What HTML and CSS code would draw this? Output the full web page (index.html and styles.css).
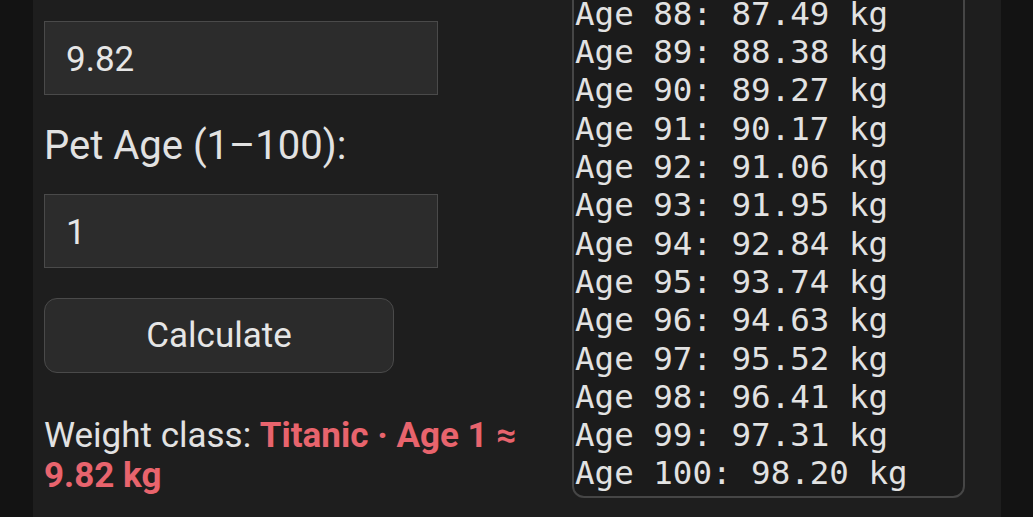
FILE: index.html
```html
<!DOCTYPE html>
<html lang="en">
<head>
<meta charset="utf-8">
<title>Pet Weight Calculator</title>
<link rel="stylesheet" href="styles.css">
</head>
<body>
<main class="panel">
  <section class="form-col">
    <input class="field" type="text" value="9.82">
    <label class="label">Pet Age (1–100):</label>
    <input class="field" type="text" value="1">
    <button class="btn" type="button">Calculate</button>
    <p class="result">Weight class: <strong class="hl">Titanic · Age 1 ≈ 9.82 kg</strong></p>
  </section>
  <section class="table-col">
<pre class="table">Age 85: 84.81 kg
Age 86: 85.70 kg
Age 87: 86.59 kg
Age 88: 87.49 kg
Age 89: 88.38 kg
Age 90: 89.27 kg
Age 91: 90.17 kg
Age 92: 91.06 kg
Age 93: 91.95 kg
Age 94: 92.84 kg
Age 95: 93.74 kg
Age 96: 94.63 kg
Age 97: 95.52 kg
Age 98: 96.41 kg
Age 99: 97.31 kg
Age 100: 98.20 kg</pre>
  </section>
</main>
</body>
</html>
```

FILE: styles.css
```css
html, body {
  margin: 0;
  padding: 0;
  background: #131313;
  height: 100%;
  overflow: hidden;
}

.panel {
  margin: 0 32px 0 33px;
  height: 100%;
  background: #1e1e1e;
  display: grid;
  grid-template-columns: 501px 393px;
  column-gap: 27px;
  padding: 0 36px 0 11px;
  box-sizing: border-box;
  font-family: Roboto, "Noto Sans", sans-serif;
  color: #e2e2e2;
}

.form-col {
  display: flex;
  flex-direction: column;
  align-items: flex-start;
  padding-top: 21px;
}

.field {
  box-sizing: border-box;
  width: 394px;
  height: 74px;
  margin: 0;
  padding: 2px 21px 0;
  background: #2c2c2c;
  border: 1px solid #4a4a4a;
  border-radius: 0;
  color: #e6e6e6;
  font-family: Roboto, "Noto Sans", sans-serif;
  font-size: 35px;
  outline: none;
}

.label {
  display: block;
  margin: 27px 0 25px;
  font-size: 40px;
  line-height: 47px;
  color: #e2e2e2;
}

.btn {
  box-sizing: border-box;
  width: 350px;
  height: 75px;
  margin: 30px 0 0;
  background: #2b2b2b;
  border: 1px solid #4a4a4a;
  border-radius: 13px;
  color: #e6e6e6;
  font-family: Roboto, "Noto Sans", sans-serif;
  font-size: 35px;
  padding: 0;
}

.result {
  margin: 43px 0 0;
  font-size: 35px;
  line-height: 40px;
  color: #e2e2e2;
}

.hl {
  color: #e8646d;
  font-weight: 700;
}

.table-col {
  min-width: 0;
}

.table {
  box-sizing: border-box;
  margin: -125px 0 0;
  padding: 3px 3px 3px 1px;
  border: 2px solid #464646;
  border-radius: 0 0 12px 12px;
  background: #1b1b1b;
  font-family: "DejaVu Sans Mono", monospace;
  font-size: 32.5px;
  line-height: 38.3px;
  color: #e2e2e2;
}
```
